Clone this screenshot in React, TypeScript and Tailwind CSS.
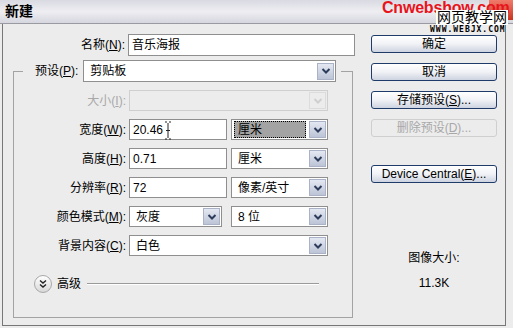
import React from "react";

const font = "font-['Liberation_Sans','Noto_Sans_CJK_SC',sans-serif]";

const Arrow = ({ disabled }: { disabled?: boolean }) => (
  <span
    className={`flex h-[17px] w-[17px] items-center justify-center border ${
      disabled
        ? "border-[#dcdcdc] bg-[#ececec]"
        : "border-[#a9b2c6] bg-gradient-to-b from-[#e4e8f2] to-[#bcc4d6]"
    }`}
  >
    <svg width="10" height="8" viewBox="0 0 10 8">
      <path
        d="M1.5 2 L5 5.5 L8.5 2"
        fill="none"
        stroke={disabled ? "#cfcfcf" : "#2e3c5c"}
        strokeWidth="2"
      />
    </svg>
  </span>
);

const Select = ({
  value,
  w,
  disabled,
  focused,
}: {
  value?: string;
  w: string;
  disabled?: boolean;
  focused?: boolean;
}) => (
  <div
    className={`flex h-[21px] items-center border pl-[2px] pr-[1px] ${w} ${
      disabled ? "border-[#cfcfcf] bg-[#ececec]" : "border-[#8f8f8f] bg-white"
    }`}
  >
    <div className="flex h-full flex-1 items-center py-[1px] pr-[3px]">
      {focused ? (
        <span className="flex h-full flex-1 items-center border border-dotted border-black bg-[#a3a3a3] pl-[3px]">
          {value}
        </span>
      ) : (
        <span className="pl-[4px]">{value}</span>
      )}
    </div>
    <Arrow disabled={disabled} />
  </div>
);

const Input = ({ value, w, children }: { value: string; w: string; children?: React.ReactNode }) => (
  <div className={`relative flex h-[21px] items-center border border-[#8f8f8f] bg-white pl-[3px] ${w}`}>
    {value}
    {children}
  </div>
);

const Label = ({ text, k, disabled }: { text: string; k: string; disabled?: boolean }) => (
  <span className={`w-[112px] text-right ${disabled ? "text-[#a8a8a8]" : ""}`}>
    {text}(<u>{k}</u>):
  </span>
);

const Button = ({ children, disabled }: { children: React.ReactNode; disabled?: boolean }) => (
  <div
    className={`flex h-[18px] w-[126px] items-center justify-center rounded-[3px] border ${
      disabled
        ? "border-[#cfcfcf] bg-[#ececec] text-[#a8a8a8]"
        : "border-[#1e3b6a] bg-gradient-to-b from-white via-[#f1f2f6] to-[#cdd3e0]"
    }`}
  >
    {children}
  </div>
);

export default function App() {
  return (
    <div className={`relative h-[328px] w-[513px] overflow-hidden bg-[#ececec] text-[12px] text-black ${font}`}>
      {/* title bar */}
      <div className="flex h-[24px] items-center border-b border-[#9a9aa2] bg-gradient-to-b from-[#d9dae2] via-[#eeeef2] to-[#d6d7df] pl-[5px]">
        <span className="text-[14px] font-bold">新建</span>
      </div>

      {/* watermark */}
      <div className="absolute right-0 top-0 h-[20px] w-[24px] rounded-bl-[3px] bg-gradient-to-b from-[#f07a6a] to-[#c8321e]" />
      <div className="absolute left-[382px] top-[-1px] whitespace-nowrap text-[16px] font-bold leading-[18px] tracking-[-0.2px] text-[#e8141c]">
        Cnwebshow.com
      </div>
      <div className="absolute left-[436px] top-[10px] whitespace-nowrap bg-white px-[1px] text-[14px] leading-[15px]">网页教学网</div>
      <div className="absolute left-[430px] top-[25px] whitespace-nowrap text-[8px] font-bold leading-[9px] tracking-[1px] font-['DejaVu_Sans_Mono',monospace]">
        WWW.WEBJX.COM
      </div>

      {/* body */}
      <div className="ml-[2px] flex h-[302px] w-[504px] border-x border-b border-[#777]">
        <div className="w-[360px] pl-[10px] pt-[10px]">
          <div className="flex items-center">
            <Label text="名称" k="N" />
            <div className="ml-[3px] flex h-[22px] w-[227px] items-center border border-[#8f8f8f] bg-white pl-[3px]">
              音乐海报
            </div>
          </div>

          <fieldset className="mt-[4px] w-[340px] border border-[#a3a3a3] pb-[24px]">
            <legend className="ml-[9px] flex items-center bg-[#ececec] pl-[12px] pr-[5px]">
              <span>
                预设(<u>P</u>):
              </span>
              <Select value="剪贴板" w="w-[253px] ml-[5px] h-[22px]" />
            </legend>

            <div className="mt-[8px] flex flex-col gap-[8px]">
              <div className="flex items-center">
                <Label text="大小" k="I" disabled />
                <Select w="ml-[3px] w-[199px]" disabled />
              </div>
              <div className="flex items-center">
                <Label text="宽度" k="W" />
                <Input value="20.46" w="ml-[3px] w-[98px]">
                  <svg className="absolute left-[34px] top-[1px]" width="8" height="19" viewBox="0 0 8 19">
                    <path d="M1 1 H3 M5 1 H7 M4 2 V17 M1 18 H3 M5 18 H7 M2 9.5 H6" stroke="#222" strokeWidth="1" fill="none" />
                  </svg>
                </Input>
                <Select value="厘米" w="ml-[4px] w-[97px]" focused />
              </div>
              <div className="flex items-center">
                <Label text="高度" k="H" />
                <Input value="0.71" w="ml-[3px] w-[98px]" />
                <Select value="厘米" w="ml-[4px] w-[97px]" />
              </div>
              <div className="flex items-center">
                <Label text="分辨率" k="R" />
                <Input value="72" w="ml-[3px] w-[98px]" />
                <Select value="像素/英寸" w="ml-[4px] w-[97px]" />
              </div>
              <div className="flex items-center">
                <Label text="颜色模式" k="M" />
                <Select value="灰度" w="ml-[3px] w-[93px]" />
                <Select value="8 位" w="ml-[9px] w-[97px]" />
              </div>
              <div className="flex items-center">
                <Label text="背景内容" k="C" />
                <Select value="白色" w="ml-[3px] w-[199px]" />
              </div>
            </div>

            <div className="mt-[19px] flex items-center pl-[20px]">
              <span className="flex h-[18px] w-[18px] items-center justify-center rounded-full border border-[#a8a8a8] bg-gradient-to-b from-white to-[#d8d8d8]">
                <svg width="10" height="10" viewBox="0 0 10 10">
                  <path d="M2 1.5 L5 4 L8 1.5 M2 5.5 L5 8 L8 5.5" stroke="#222" strokeWidth="1.4" fill="none" />
                </svg>
              </span>
              <span className="ml-[5px]">高级</span>
              <div className="ml-[6px] h-[2px] w-[232px] border-t border-b border-t-[#9a9a9a] border-b-white" />
            </div>
          </fieldset>
        </div>

        <div className="ml-[8px] flex w-[126px] flex-col pt-[11px]">
          <div className="flex flex-col gap-[10px]">
            <Button>确定</Button>
            <Button>取消</Button>
            <Button>
              存储预设(<u>S</u>)...
            </Button>
            <Button disabled>
              删除预设(<u>D</u>)...
            </Button>
          </div>
          <div className="mt-[28px]">
            <Button>
              Device Central(<u>E</u>)...
            </Button>
          </div>
          <div className="mt-[67px] text-center leading-[16px]">图像大小:</div>
          <div className="mt-[9px] text-center leading-[16px]">11.3K</div>
        </div>
      </div>
    </div>
  );
}
